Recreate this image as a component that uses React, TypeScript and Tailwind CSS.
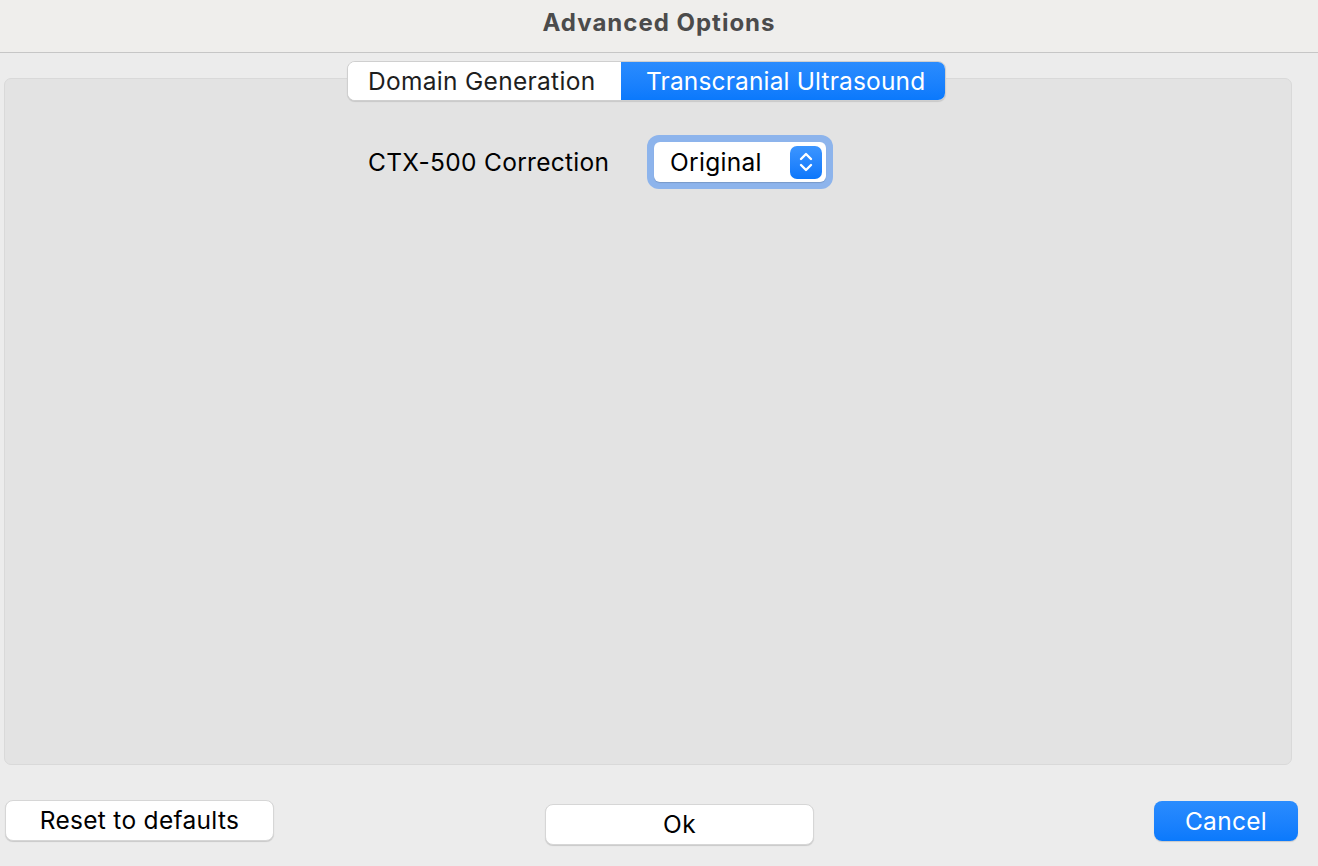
import { useState } from "react";

const font = { fontFamily: "Inter, 'Liberation Sans', sans-serif" };

const Stepper = () => (
  <span className="flex h-[33px] w-[32px] items-center justify-center rounded-[7px] bg-gradient-to-b from-[#3b95ff] to-[#0a77fb]">
    <svg width="16" height="26" viewBox="0 0 16 26" fill="none" stroke="white" strokeWidth="2.4" strokeLinecap="round" strokeLinejoin="round">
      <path d="M3 10 L8 5 L13 10" />
      <path d="M3 16 L8 21 L13 16" />
    </svg>
  </span>
);

export default function App() {
  const [tab, setTab] = useState(1);
  const tabs = [
    { label: "Domain Generation", w: "w-[273px] pl-[20px]" },
    { label: "Transcranial Ultrasound", w: "w-[324px] pl-[25px]" },
  ];

  return (
    <div className="flex h-[866px] w-[1318px] flex-col bg-[#ececec] text-black" style={font}>
      <div className="flex h-[53px] shrink-0 items-center justify-center border-b border-[#c6c6c6] bg-[#efeeec]">
        <span className="pb-[6px] text-[24px] font-bold tracking-[1px] text-[#4b4b4b]">Advanced Options</span>
      </div>

      <div className="relative flex-1">
        <div className="ml-[4px] mt-[25px] h-[687px] w-[1288px] rounded-[7px] border border-[#d9d9d9] bg-[#e3e3e3]">
          <div className="mt-[56px] flex items-center">
            <span className="ml-[363px] w-[279px] text-[24.5px] tracking-[0.3px]">CTX-500 Correction</span>
            <div className="rounded-[12px] bg-[#8db4ec] p-[7px]">
              <div className="flex h-[40px] w-[172px] items-center justify-between rounded-[6px] bg-white pl-[16px] pr-[4px] shadow-[0_1px_1px_rgba(0,0,0,0.15)]">
                <span className="text-[24.5px] tracking-[0.3px]">Original</span>
                <Stepper />
              </div>
            </div>
          </div>
        </div>

        <div className="absolute left-[347px] top-[8px] flex h-[40px] overflow-hidden rounded-[8px] border border-[#cfcfcf] bg-white shadow-[0_1px_1px_rgba(0,0,0,0.12)]">
          {tabs.map((t, i) => (
            <button
              key={t.label}
              onClick={() => setTab(i)}
              className={
                i === tab
                  ? `flex h-full items-center bg-gradient-to-b from-[#2a8cfe] to-[#0a79fc] text-[24.5px] tracking-[0.15px] text-white ${t.w}`
                  : `flex h-full items-center bg-white text-[24.5px] tracking-[0.3px] text-[#1e1e1e] ${t.w}`
              }
            >
              {t.label}
            </button>
          ))}
        </div>

        <div className="flex items-start pl-[5px] text-[24.5px] tracking-[0.3px]">
          <button className="mt-[35px] h-[41px] w-[269px] rounded-[8px] border border-[#d6d6d6] bg-white shadow-[0_1px_1px_rgba(0,0,0,0.15)]">
            Reset to defaults
          </button>
          <button className="ml-[271px] mt-[39px] h-[41px] w-[269px] rounded-[8px] border border-[#d6d6d6] bg-white shadow-[0_1px_1px_rgba(0,0,0,0.15)]">
            Ok
          </button>
          <button className="ml-[340px] mt-[36px] h-[40px] w-[144px] rounded-[8px] bg-gradient-to-b from-[#2a8cfe] to-[#0a79fc] text-white shadow-[0_1px_1px_rgba(0,0,0,0.15)]">
            Cancel
          </button>
        </div>
      </div>
    </div>
  );
}
